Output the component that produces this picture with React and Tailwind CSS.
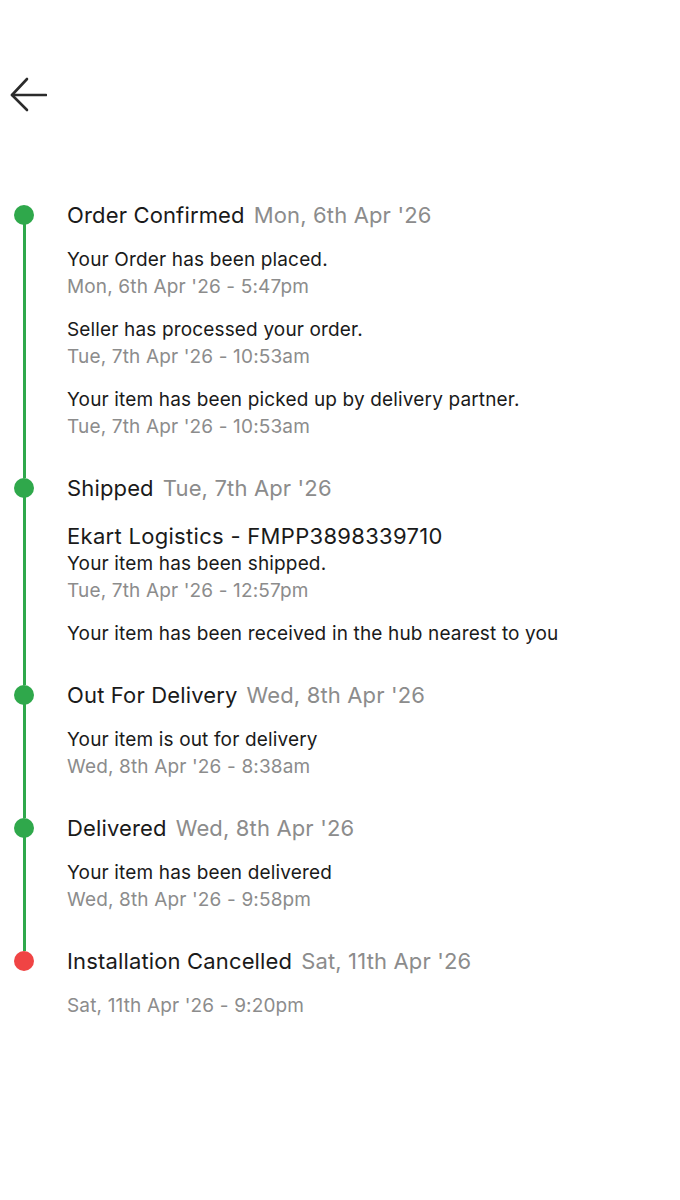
import React from 'react';

const sections = [
  {
    title: 'Order Confirmed',
    date: "Mon, 6th Apr '26",
    events: [
      { text: 'Your Order has been placed.', time: "Mon, 6th Apr '26 - 5:47pm" },
      { text: 'Seller has processed your order.', time: "Tue, 7th Apr '26 - 10:53am" },
      { text: 'Your item has been picked up by delivery partner.', time: "Tue, 7th Apr '26 - 10:53am" },
    ],
  },
  {
    title: 'Shipped',
    date: "Tue, 7th Apr '26",
    courier: 'Ekart Logistics - FMPP3898339710',
    events: [
      { text: 'Your item has been shipped.', time: "Tue, 7th Apr '26 - 12:57pm" },
      { text: 'Your item has been received in the hub nearest to you' },
    ],
  },
  {
    title: 'Out For Delivery',
    date: "Wed, 8th Apr '26",
    events: [{ text: 'Your item is out for delivery', time: "Wed, 8th Apr '26 - 8:38am" }],
  },
  {
    title: 'Delivered',
    date: "Wed, 8th Apr '26",
    events: [{ text: 'Your item has been delivered', time: "Wed, 8th Apr '26 - 9:58pm" }],
  },
  {
    title: 'Installation Cancelled',
    date: "Sat, 11th Apr '26",
    cancelled: true,
    events: [{ time: "Sat, 11th Apr '26 - 9:20pm" }],
  },
];

function Section({ section, first, last }) {
  return (
    <div className="flex">
      {/* rail */}
      <div className="w-[48px] flex flex-col items-center">
        <div className={`h-[5px] w-[3px] ${first ? 'bg-transparent' : 'bg-[#2fa84b]'}`}></div>
        <div
          className={`w-[20px] h-[20px] rounded-full shrink-0 ${
            section.cancelled ? 'bg-[#f04444]' : 'bg-[#2fa84b]'
          }`}
        ></div>
        {!last && <div className="flex-1 w-[3px] bg-[#2fa84b] -mt-[1px]"></div>}
      </div>

      <div className={`flex-1 pl-[19px] ${last ? '' : 'pb-[33px]'}`}>
        <div className="text-[22px] leading-[30px] tracking-[0.15px] whitespace-nowrap">
          <span className="text-[#1a1a1a]">{section.title}</span>
          <span className="text-[#8c8c8c] ml-[9px]">{section.date}</span>
        </div>

        {section.courier && (
          <div className="mt-[19px] text-[22px] leading-[28px] tracking-[0.3px] text-[#1a1a1a]">
            {section.courier}
          </div>
        )}

        <div className={`flex flex-col gap-4 ${section.courier ? '' : 'mt-4'}`}>
          {section.events.map((ev, i) => (
            <div key={i} className="text-[19px] leading-[27px] tracking-[0.15px]">
              {ev.text && <div className="text-[#1a1a1a]">{ev.text}</div>}
              {ev.time && <div className="text-[#8c8c8c]">{ev.time}</div>}
            </div>
          ))}
        </div>
      </div>
    </div>
  );
}

export default function App() {
  return (
    <div
      className="w-[680px] h-[1200px] bg-white"
      style={{ fontFamily: 'Inter, "Noto Sans", sans-serif' }}
    >
      <div className="pt-[77px] pl-[10px]">
        <svg width="37" height="36" viewBox="0 0 37 36" fill="none" stroke="#2b2b2b" strokeWidth="2.6" strokeLinecap="round" strokeLinejoin="round">
          <path d="M36 18H2" />
          <path d="M17 2L2 18L17 33" />
        </svg>
      </div>

      <div className="mt-[87px]">
        {sections.map((s, i) => (
          <Section key={i} section={s} first={i === 0} last={i === sections.length - 1} />
        ))}
      </div>
    </div>
  );
}
